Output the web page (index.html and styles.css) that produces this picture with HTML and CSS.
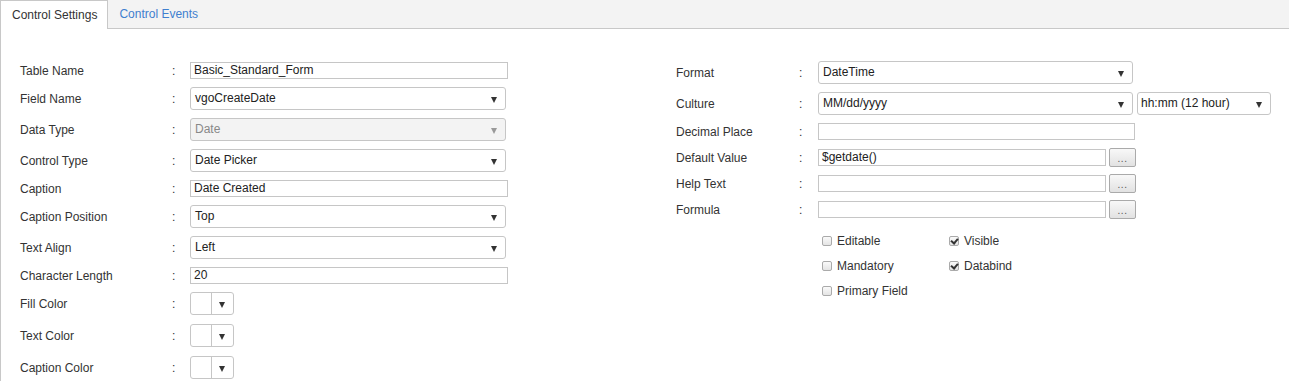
FILE: index.html
```html
<!DOCTYPE html>
<html lang="en">
<head>
    <meta charset="UTF-8">
    <title>Control Settings</title>
    <link rel="stylesheet" href="styles.css">
</head>
<body>

    <div class="tabs">
        <div class="tab active">Control Settings</div>
        <div class="tab">Control Events</div>
    </div>

    <div class="panel">
        <div class="column left-col">
            <div class="row">
                <div class="label">Table Name</div>
                <div class="colon">:</div>
                <div class="text-input">Basic_Standard_Form</div>
            </div>
            <div class="row">
                <div class="label">Field Name</div>
                <div class="colon">:</div>
                <div class="select">vgoCreateDate<span class="arrow"></span></div>
            </div>
            <div class="row">
                <div class="label">Data Type</div>
                <div class="colon">:</div>
                <div class="select disabled">Date<span class="arrow"></span></div>
            </div>
            <div class="row">
                <div class="label">Control Type</div>
                <div class="colon">:</div>
                <div class="select">Date Picker<span class="arrow"></span></div>
            </div>
            <div class="row">
                <div class="label">Caption</div>
                <div class="colon">:</div>
                <div class="text-input">Date Created</div>
            </div>
            <div class="row">
                <div class="label">Caption Position</div>
                <div class="colon">:</div>
                <div class="select">Top<span class="arrow"></span></div>
            </div>
            <div class="row">
                <div class="label">Text Align</div>
                <div class="colon">:</div>
                <div class="select">Left<span class="arrow"></span></div>
            </div>
            <div class="row">
                <div class="label">Character Length</div>
                <div class="colon">:</div>
                <div class="text-input">20</div>
            </div>
            <div class="row color-row">
                <div class="label">Fill Color</div>
                <div class="colon">:</div>
                <div class="color-picker"><span class="swatch"></span><span class="picker-btn"><span class="arrow"></span></span></div>
            </div>
            <div class="row color-row">
                <div class="label">Text Color</div>
                <div class="colon">:</div>
                <div class="color-picker"><span class="swatch"></span><span class="picker-btn"><span class="arrow"></span></span></div>
            </div>
            <div class="row color-row">
                <div class="label">Caption Color</div>
                <div class="colon">:</div>
                <div class="color-picker"><span class="swatch"></span><span class="picker-btn"><span class="arrow"></span></span></div>
            </div>
        </div>

        <div class="column right-col">
            <div class="row">
                <div class="label">Format</div>
                <div class="colon">:</div>
                <div class="select wide">DateTime<span class="arrow"></span></div>
            </div>
            <div class="row">
                <div class="label">Culture</div>
                <div class="colon">:</div>
                <div class="select wide">MM/dd/yyyy<span class="arrow"></span></div>
                <div class="select time">hh:mm (12 hour)<span class="arrow"></span></div>
            </div>
            <div class="row">
                <div class="label">Decimal Place</div>
                <div class="colon">:</div>
                <div class="text-input wide"></div>
            </div>
            <div class="row btn-row">
                <div class="label">Default Value</div>
                <div class="colon">:</div>
                <div class="text-input short">$getdate()</div>
                <div class="dots-btn">...</div>
            </div>
            <div class="row btn-row">
                <div class="label">Help Text</div>
                <div class="colon">:</div>
                <div class="text-input short"></div>
                <div class="dots-btn">...</div>
            </div>
            <div class="row btn-row">
                <div class="label">Formula</div>
                <div class="colon">:</div>
                <div class="text-input short"></div>
                <div class="dots-btn">...</div>
            </div>

            <div class="checks">
                <label class="check"><span class="box"></span>Editable</label>
                <label class="check"><span class="box checked"></span>Visible</label>
                <label class="check"><span class="box"></span>Mandatory</label>
                <label class="check"><span class="box checked"></span>Databind</label>
                <label class="check"><span class="box"></span>Primary Field</label>
            </div>
        </div>
    </div>

</body>
</html>
```

FILE: styles.css
```css
* {
    margin: 0;
    padding: 0;
    box-sizing: border-box;
}

body {
    font-family: 'Liberation Sans', Arial, sans-serif;
    font-size: 12px;
    color: #333;
    background: #fff;
}

/* tabs */
.tabs {
    display: flex;
    height: 29px;
    background: #f3f3f3;
    border-bottom: 1px solid #c8c8c8;
}

.tab {
    height: 28px;
    line-height: 28px;
    padding: 0 11px 0 11px;
    color: #3f7fcf;
}

.tab.active {
    height: 29px;
    background: #fff;
    color: #333;
    border: 1px solid #c8c8c8;
    border-bottom: none;
    padding: 0 10px 0 11px;
}

/* panel */
.panel {
    display: flex;
    align-items: flex-start;
    border-left: 1px solid #c8c8c8;
    padding: 32px 0 0 19px;
    height: 352px;
}

.column {
    display: flex;
    flex-direction: column;
}

.left-col {
    width: 488px;
    margin-top: 1px;
}

.right-col {
    margin-left: 168px;
}

.row {
    display: flex;
    align-items: center;
    margin-bottom: 8px;
}

.color-row {
    margin-bottom: 9px;
}

.left-col .label {
    width: 152px;
}

.right-col .label {
    width: 123px;
}

.colon {
    width: 18px;
}

.right-col .colon {
    width: 19px;
}

/* inputs */
.text-input {
    width: 318px;
    height: 17px;
    line-height: 15px;
    border: 1px solid #c6c6c6;
    padding: 0 3px;
    color: #222;
    background: #fff;
}

.text-input.wide {
    width: 317px;
}

.text-input.short {
    width: 288px;
}

.select {
    position: relative;
    width: 316px;
    height: 23px;
    line-height: 21px;
    border: 1px solid #c6c6c6;
    border-radius: 3px;
    padding: 0 4px;
    color: #222;
    background: #fff;
}

.select.wide {
    width: 315px;
}

.select.time {
    width: 134px;
    margin-left: 4px;
    padding-left: 3px;
}

.select.disabled {
    background: #f3f3f3;
    color: #888;
}

.arrow {
    position: absolute;
    right: 8px;
    top: 9px;
    width: 0;
    height: 0;
    border-left: 3.5px solid transparent;
    border-right: 3.5px solid transparent;
    border-top: 6px solid #333;
}

.select.disabled .arrow {
    border-top-color: #999;
}

/* color picker */
.color-picker {
    display: flex;
    width: 44px;
    height: 23px;
    border: 1px solid #c6c6c6;
    border-radius: 3px;
    background: #fff;
}

.swatch {
    width: 21px;
    border-right: 1px solid #c6c6c6;
}

.picker-btn {
    position: relative;
    flex: 1;
}

.picker-btn .arrow {
    right: 8px;
}

/* ... buttons */
.btn-row {
    margin-bottom: 7px;
}

.btn-row .text-input {
    margin-right: 3px;
}

.dots-btn {
    width: 27px;
    height: 19px;
    line-height: 20px;
    border: 1px solid #aaa;
    border-radius: 2px;
    background: linear-gradient(to bottom, #f8f8f8, #e2e2e2);
    text-align: center;
    font-size: 10px;
    color: #555;
    letter-spacing: 0.5px;
}

/* checkboxes */
.checks {
    display: grid;
    grid-template-columns: 127px 127px;
    row-gap: 9px;
    margin: 7px 0 0 146px;
}

.check {
    display: flex;
    align-items: center;
    height: 16px;
    color: #333;
}

.box {
    position: relative;
    width: 10px;
    height: 10px;
    margin-right: 5px;
    border: 1px solid #aaa;
    border-radius: 2px;
    background: linear-gradient(to bottom, #fafafa, #e4e4e4);
}

.box.checked::after {
    content: "";
    position: absolute;
    left: 2px;
    top: 0;
    width: 3px;
    height: 5px;
    border-right: 2px solid #333;
    border-bottom: 2px solid #333;
    transform: rotate(40deg);
}
```
